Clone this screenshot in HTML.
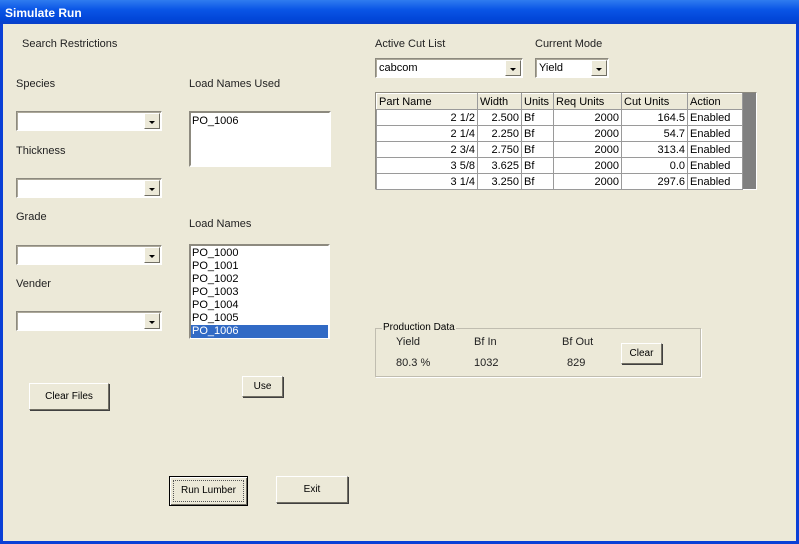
<!DOCTYPE html>
<html><head><style>
*{margin:0;padding:0;box-sizing:border-box}
body{width:799px;height:544px;overflow:hidden;background:#0a3fd6;font-family:"Liberation Sans",sans-serif;font-size:11px;color:#000;position:relative}
.title{position:absolute;left:0;top:0;width:799px;height:24px;background:linear-gradient(#2f7cf0,#0a55e6 40%,#0246d8 80%,#0a3fc8);color:#fff;font-weight:bold;font-size:12px;padding:6px 0 0 5px}
.client{position:absolute;left:3px;top:24px;width:793px;height:517px;background:#ece9d8}
.a{position:absolute}
.lbl{position:absolute;font-size:11px;color:#222}
.combo{position:absolute;background:#fff;border:1px solid;border-color:#8d8a7f #fff #fff #8d8a7f;box-shadow:inset 1px 1px 0 #aca899}
.combo .btn{position:absolute;right:1px;top:1px;bottom:1px;width:16px;background:#ece9d8;border:1px solid;border-color:#fff #716f64 #716f64 #fff}
.combo .btn:after{content:"";position:absolute;left:4px;top:7px;border-left:3px solid transparent;border-right:3px solid transparent;border-top:3px solid #000}
.combo span{position:absolute;left:3px;top:3px;font-size:11px}
.list{position:absolute;background:#fff;border:2px solid;border-color:#8d8a7f #fff #fff #8d8a7f}
.list div{height:13px;line-height:13px;padding-left:1px;font-size:11px}
.list .sel{background:#316ac5;color:#fff}
.pb{position:absolute;background:#ece9d8;border:1px solid;border-color:#fff #716f64 #716f64 #fff;box-shadow:1px 1px 0 #404040;font-size:10px;text-align:center}
table{position:absolute;border-collapse:collapse;background:#fff;font-size:11px}
td{border:1px solid #9a9a9a;height:16px;padding:0 2px;white-space:nowrap}
th{font-weight:normal;text-align:left;background:#ece9d8;border:1px solid #9a9a9a;height:16px;padding:0 2px;border-top-color:#fff;border-left-color:#fff}
.r{text-align:right}
</style></head><body>
<div class="title">Simulate Run</div>
<div class="client">
<div class="lbl" style="left:19px;top:14px">Search Restrictions</div>
<div class="lbl" style="left:13px;top:54px">Species</div>
<div class="combo" style="left:13px;top:87px;width:146px;height:20px"><div class="btn"></div></div>
<div class="lbl" style="left:13px;top:121px">Thickness</div>
<div class="combo" style="left:13px;top:154px;width:146px;height:20px"><div class="btn"></div></div>
<div class="lbl" style="left:13px;top:187px">Grade</div>
<div class="combo" style="left:13px;top:221px;width:146px;height:20px"><div class="btn"></div></div>
<div class="lbl" style="left:13px;top:254px">Vender</div>
<div class="combo" style="left:13px;top:287px;width:146px;height:20px"><div class="btn"></div></div>

<div class="lbl" style="left:186px;top:54px">Load Names Used</div>
<div class="list" style="left:186px;top:87px;width:142px;height:56px;padding-top:2px"><div>PO_1006</div></div>
<div class="lbl" style="left:186px;top:194px">Load Names</div>
<div class="list" style="left:186px;top:220px;width:141px;height:95px;padding-top:1px">
<div>PO_1000</div><div>PO_1001</div><div>PO_1002</div><div>PO_1003</div><div>PO_1004</div><div>PO_1005</div><div class="sel">PO_1006</div></div>
<div class="pb" style="left:239px;top:352px;width:41px;height:21px;line-height:19px">Use</div>
<div class="pb" style="left:26px;top:359px;width:80px;height:27px;line-height:25px">Clear Files</div>
<div class="pb" style="left:166px;top:452px;width:79px;height:30px;border:1px solid #000;box-shadow:inset 1px 1px 0 #fff,inset -1px -1px 0 #716f64"><div style="margin:3px;border:1px dotted #555;height:22px;line-height:20px">Run Lumber</div></div>
<div class="pb" style="left:273px;top:452px;width:72px;height:27px;line-height:25px">Exit</div>

<div class="lbl" style="left:372px;top:14px">Active Cut List</div>
<div class="combo" style="left:372px;top:34px;width:148px;height:20px"><span>cabcom</span><div class="btn"></div></div>
<div class="lbl" style="left:532px;top:14px">Current Mode</div>
<div class="combo" style="left:532px;top:34px;width:74px;height:20px"><span>Yield</span><div class="btn"></div></div>

<div class="a" style="left:372px;top:68px;width:382px;height:98px;border:1px solid;border-color:#8d8a7f #fff #fff #8d8a7f;background:#808080"></div>
<table style="left:373px;top:69px;width:367px">
<tr><th style="width:101px">Part Name</th><th style="width:44px">Width</th><th style="width:32px">Units</th><th style="width:68px">Req Units</th><th style="width:66px">Cut Units</th><th>Action</th></tr>
<tr><td class="r">2 1/2</td><td class="r">2.500</td><td>Bf</td><td class="r">2000</td><td class="r">164.5</td><td>Enabled</td></tr>
<tr><td class="r">2 1/4</td><td class="r">2.250</td><td>Bf</td><td class="r">2000</td><td class="r">54.7</td><td>Enabled</td></tr>
<tr><td class="r">2 3/4</td><td class="r">2.750</td><td>Bf</td><td class="r">2000</td><td class="r">313.4</td><td>Enabled</td></tr>
<tr><td class="r">3 5/8</td><td class="r">3.625</td><td>Bf</td><td class="r">2000</td><td class="r">0.0</td><td>Enabled</td></tr>
<tr><td class="r">3 1/4</td><td class="r">3.250</td><td>Bf</td><td class="r">2000</td><td class="r">297.6</td><td>Enabled</td></tr>
</table>

<div class="a" style="left:372px;top:304px;width:326px;height:49px;border:1px solid #c0bdb0;box-shadow:1px 1px 0 #fff"></div>
<div class="a" style="left:379px;top:298px;font-size:10px;background:#ece9d8;padding:0 1px">Production Data</div>
<div class="lbl" style="left:393px;top:312px">Yield</div>
<div class="lbl" style="left:471px;top:312px">Bf In</div>
<div class="lbl" style="left:559px;top:312px">Bf Out</div>
<div class="lbl" style="left:393px;top:333px">80.3 %</div>
<div class="lbl" style="left:471px;top:333px">1032</div>
<div class="lbl" style="left:564px;top:333px">829</div>
<div class="pb" style="left:618px;top:319px;width:41px;height:21px;line-height:19px">Clear</div>
</div>
</body></html>
